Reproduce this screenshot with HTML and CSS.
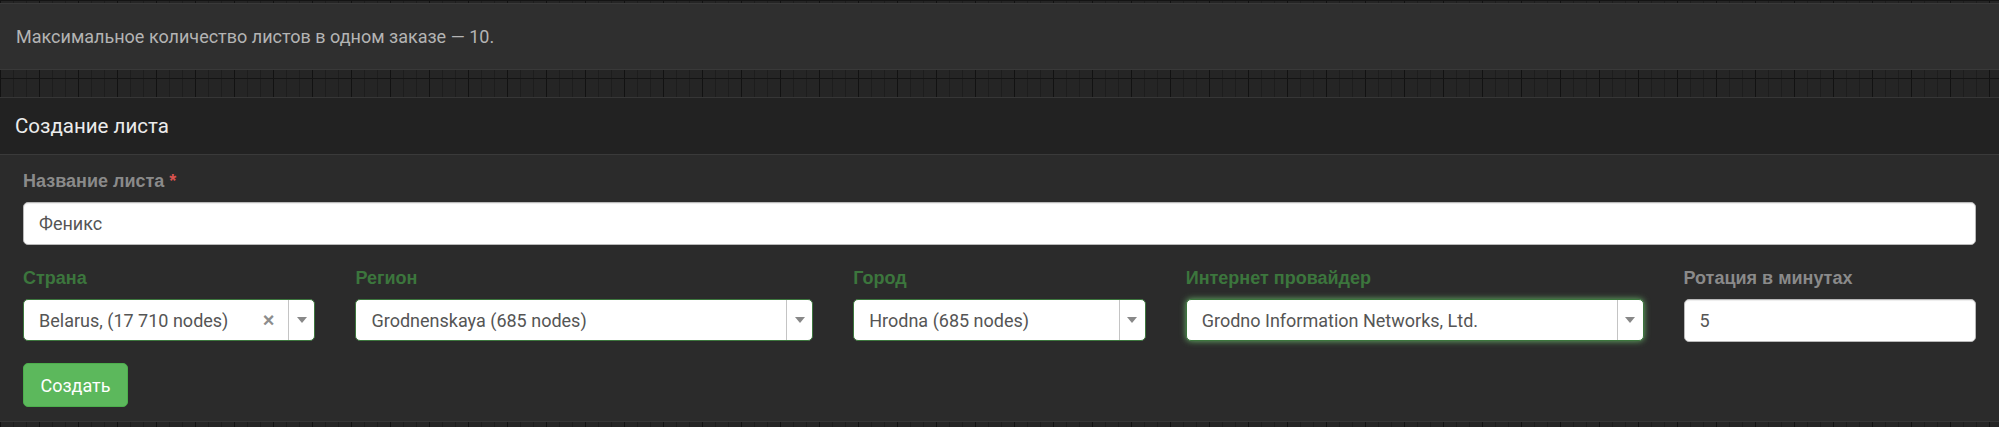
FILE: index.html
```html
<!DOCTYPE html>
<html lang="ru">
<head>
<meta charset="utf-8">
<title>Создание листа</title>
<link rel="stylesheet" href="styles.css">
</head>
<body>
<div class="notice">Максимальное количество листов в одном заказе — 10.</div>

<div class="card">
  <div class="card-header">Создание листа</div>
  <div class="card-body">
    <div class="field">
      <label class="label">Название листа <span class="req">*</span></label>
      <div class="input">Феникс</div>
    </div>

    <div class="row">
      <div class="field ok">
        <label class="label">Страна</label>
        <div class="select">
          <span class="sel-text">Belarus, (17 710 nodes)</span>
          <span class="sel-clear">×</span>
          <span class="sel-arrow"><span class="tri"></span></span>
        </div>
      </div>
      <div class="field ok">
        <label class="label">Регион</label>
        <div class="select">
          <span class="sel-text">Grodnenskaya (685 nodes)</span>
          <span class="sel-arrow"><span class="tri"></span></span>
        </div>
      </div>
      <div class="field ok">
        <label class="label">Город</label>
        <div class="select">
          <span class="sel-text">Hrodna (685 nodes)</span>
          <span class="sel-arrow"><span class="tri"></span></span>
        </div>
      </div>
      <div class="field ok">
        <label class="label">Интернет провайдер</label>
        <div class="select focus">
          <span class="sel-text">Grodno Information Networks, Ltd.</span>
          <span class="sel-arrow"><span class="tri"></span></span>
        </div>
      </div>
      <div class="field">
        <label class="label">Ротация в минутах</label>
        <div class="input">5</div>
      </div>
    </div>

    <button class="btn">Создать</button>
  </div>
</div>
</body>
</html>
```

FILE: styles.css
```css
html, body {
  margin: 0;
  padding: 0;
}
body {
  width: 1999px;
  height: 427px;
  overflow: hidden;
  background-color: #252525;
  background-image:
    repeating-linear-gradient(to bottom, #141414 0, #141414 1px, transparent 1px, transparent 39px),
    repeating-linear-gradient(to right, #121212 0, #121212 1px, transparent 1px, transparent 39px),
    repeating-linear-gradient(to right, #1d1d1d 0, #1d1d1d 1px, transparent 1px, transparent 13px);
  font-family: Roboto, "Liberation Sans", sans-serif;
  padding-top: 3px;
  box-sizing: border-box;
}

.notice {
  height: 67px;
  box-sizing: border-box;
  background: #2f2f2f;
  border-top: 1px solid #393939;
  border-bottom: 1px solid #393939;
  padding-left: 16px;
  display: flex;
  align-items: center;
  color: #b4b4b4;
  font-size: 18px;
}

.card {
  margin-top: 27px;
  background: #2b2b2b;
  border-top: 1px solid #363636;
  border-bottom: 1px solid #363636;
}
.card-header {
  height: 57px;
  box-sizing: border-box;
  background: #222222;
  border-bottom: 1px solid #3a3a3a;
  padding-left: 15px;
  display: flex;
  align-items: center;
  color: #ececec;
  font-size: 20.5px;
}
.card-body {
  padding: 16px 23px 14px;
}

.field {
  display: flex;
  flex-direction: column;
  min-width: 0;
}
.label {
  font-family: "Liberation Sans", Arial, sans-serif;
  font-weight: 700;
  font-size: 18px;
  line-height: 20px;
  color: #8a8a8a;
  margin-bottom: 11px;
}
.req {
  color: #d9534f;
}
.ok .label {
  color: #3c763d;
}

.input {
  height: 43px;
  box-sizing: border-box;
  background: #fff;
  border: 1px solid #b9b9b9;
  border-radius: 5px;
  padding: 0 15px;
  display: flex;
  align-items: center;
  font-size: 18px;
  color: #555;
  box-shadow: inset 0 1px 1px rgba(0,0,0,.075);
}

.row {
  display: grid;
  grid-template-columns: 292fr 457fr 292fr 457fr 292fr;
  column-gap: 40px;
  margin-top: 23px;
}

.select {
  height: 42px;
  box-sizing: border-box;
  background: #fff;
  border: 1px solid #3c763d;
  border-radius: 5px;
  display: flex;
  align-items: stretch;
  font-size: 18px;
  color: #555;
}
.select.focus {
  box-shadow: 0 0 6px #67b168;
}
.sel-text {
  flex: 1;
  display: flex;
  align-items: center;
  padding-left: 15px;
  white-space: nowrap;
  overflow: hidden;
}
.sel-clear {
  display: flex;
  align-items: center;
  padding-right: 14px;
  color: #8d8d8d;
  font-size: 20px;
  font-weight: 700;
  font-family: "Liberation Sans", Arial, sans-serif;
}
.sel-arrow {
  width: 25px;
  border-left: 1px solid #c4c4c4;
  display: flex;
  align-items: center;
  justify-content: center;
}
.tri {
  width: 0;
  height: 0;
  border-left: 5px solid transparent;
  border-right: 5px solid transparent;
  border-top: 6px solid #888;
}

.btn {
  margin-top: 21px;
  height: 44px;
  width: 105px;
  background: #5cb85c;
  border: 1px solid #4cae4c;
  border-radius: 5px;
  color: #fff;
  font-family: Roboto, "Liberation Sans", sans-serif;
  font-size: 18px;
  padding: 0;
  display: block;
}
```
